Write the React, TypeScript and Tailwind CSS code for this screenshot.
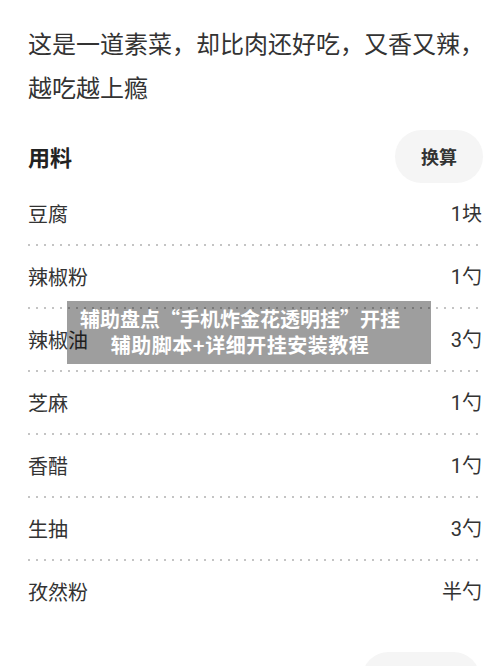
import React from 'react';

const ingredients: { name: string; amount: string }[] = [
  { name: '豆腐', amount: '1块' },
  { name: '辣椒粉', amount: '1勺' },
  { name: '辣椒油', amount: '3勺' },
  { name: '芝麻', amount: '1勺' },
  { name: '香醋', amount: '1勺' },
  { name: '生抽', amount: '3勺' },
  { name: '孜然粉', amount: '半勺' },
];

const font = { fontFamily: '"Noto Sans CJK SC", "Noto Sans", Roboto, sans-serif' };

const Divider: React.FC = () => (
  <div className="h-[2px] w-full bg-[linear-gradient(to_right,#c4c4c4_2px,transparent_2px)] bg-[length:8px_2px] bg-repeat-x" />
);

const App: React.FC = () => {
  return (
    <div className="relative min-h-[666px] w-[500px] overflow-hidden bg-white text-[#333]" style={font}>
      <div className="pl-[28px] pr-[18px]">
        <p className="w-[460px] pt-[21px] text-[24px] leading-[44px] text-[#333]">
          这是一道素菜，却比肉还好吃，又香又辣，越吃越上瘾
        </p>

        <div className="mt-[21px] flex h-[53px] items-center justify-between">
          <h2 className="text-[22px] font-bold text-[#222]">用料</h2>
          <button className="mr-[-1px] h-[53px] w-[88px] rounded-full bg-[#f5f5f5] text-[18px] font-bold text-[#333]">
            换算
          </button>
        </div>

        <div>
          {ingredients.map((item, i) => (
            <div key={item.name}>
              <div className="flex h-[61px] items-center justify-between text-[20px] text-[#333]">
                <span>{item.name}</span>
                <span style={{ fontFamily: 'Roboto, "Noto Sans CJK SC", sans-serif' }}>{item.amount}</span>
              </div>
              {i < ingredients.length - 1 && <Divider />}
            </div>
          ))}
        </div>

        <div className="mt-[30px] flex justify-end">
          <div className="mr-[2px] h-[53px] w-[118px] rounded-full bg-[#f5f5f5]" />
        </div>
      </div>

      {/* watermark banner over the list */}
      <div className="absolute left-[67px] top-[301px] w-[364px] bg-black/[0.38] pt-[5px] pb-[6px] pl-[2px] pr-[20px] text-center text-[20px] font-bold leading-[26px] text-white">
        <div>辅助盘点“手机炸金花透明挂”开挂</div>
        <div className="tracking-[0.5px]">辅助脚本+详细开挂安装教程</div>
      </div>
    </div>
  );
};

export default App;
